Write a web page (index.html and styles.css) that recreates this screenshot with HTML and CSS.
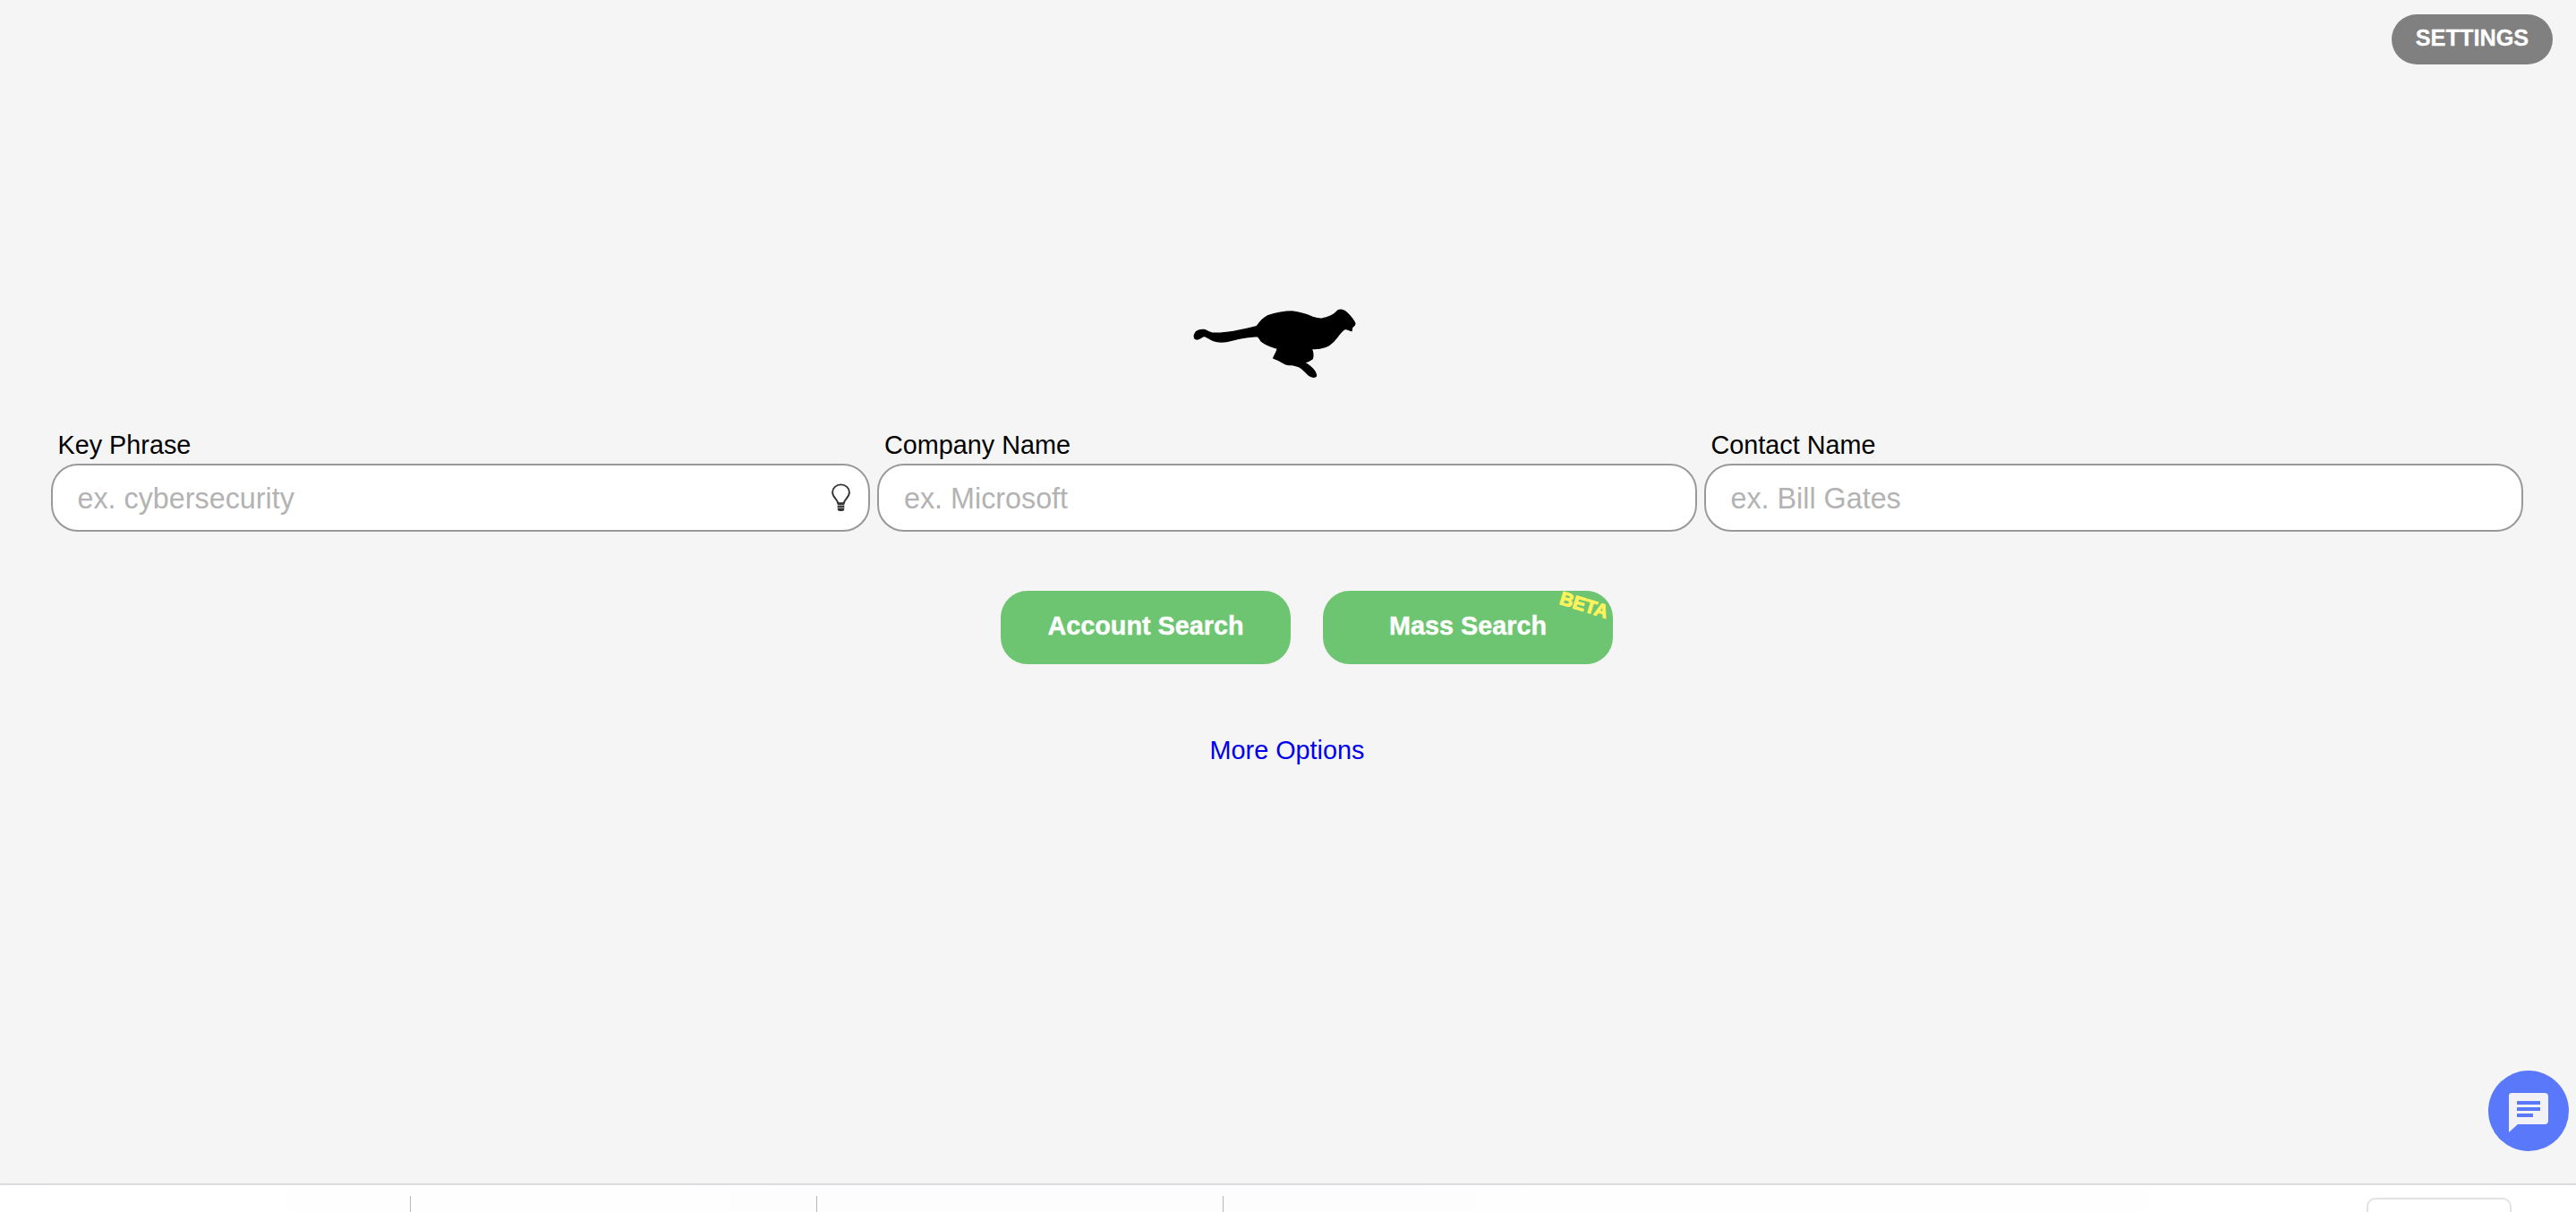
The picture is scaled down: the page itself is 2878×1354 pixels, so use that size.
FILE: index.html
```html
<!DOCTYPE html>
<html lang="en">
<head>
<meta charset="utf-8">
<title>Search</title>
<link rel="stylesheet" href="styles.css">
</head>
<body>
<div class="page">
  <header class="topbar"><button class="settings">SETTINGS</button></header>
  <div class="logo-row">
    <svg class="logo" viewBox="0 0 840 360" width="280" height="120" aria-hidden="true">
      <path fill-rule="evenodd" d="M163 163C166 150 178 144 195 145C205 147 208 154 222 156C250 159 310 150 372 134C382 120 392 106 408 99C435 90 462 84 490 84C515 86 535 93 560 103C572 107 582 109 592 108C610 105 630 97 645 80C655 77 668 82 676 90C686 100 697 112 702 125C700 132 696 135 692 137L690 149C682 148 676 142 668 142C660 146 650 158 640 172C628 188 612 203 590 206C578 209 566 209 556 209C561 220 562 232 559 242C552 248 542 252 532 255C545 262 558 272 566 284C570 291 573 297 571 301C566 306 555 304 546 297C535 288 528 276 515 270C505 266 495 264 488 262C478 264 468 262 460 256C450 248 440 244 428 240C432 232 438 222 442 208C425 204 400 194 388 184C384 178 380 171 376 167C345 168 320 173 290 180C270 186 245 188 228 182C215 177 205 168 195 166C187 170 182 176 172 177C165 177 161 172 163 163ZM462 235C468 238 476 238 482 235C476 233 468 233 462 235ZM520 236C527 234 531 229 530 222C532 229 528 235 520 236Z"/>
    </svg>
  </div>
  <form class="fields">
    <label class="field">
      <span class="field-label">Key Phrase</span>
      <span class="input-wrap">
        <input class="input" type="text" placeholder="ex. cybersecurity">
        <svg class="bulb" viewBox="0 0 24 34" width="23" height="32" aria-hidden="true">
          <path d="M8.500 23.500C8 19 2 16.500 2 10.500C2 5.500 6.500 1.500 12 1.500C17.500 1.500 22 5.500 22 10.500C22 16.500 16 19 15.500 23.500Z" fill="none" stroke="#333" stroke-width="2"/>
          <path d="M8 23h8v7.500q0 2.500-2.500 2.500h-3q-2.500 0-2.500-2.500z" fill="#333"/>
          <path d="M8 26h8M8 29h8" stroke="#bbb" stroke-width="1"/>
        </svg>
      </span>
    </label>
    <label class="field">
      <span class="field-label">Company Name</span>
      <span class="input-wrap"><input class="input" type="text" placeholder="ex. Microsoft"></span>
    </label>
    <label class="field">
      <span class="field-label">Contact Name</span>
      <span class="input-wrap"><input class="input" type="text" placeholder="ex. Bill Gates"></span>
    </label>
  </form>
  <div class="actions">
    <button class="action">Account Search</button>
    <button class="action">Mass Search<span class="beta">BETA</span></button>
  </div>
  <a class="more" href="#">More Options</a>
  <footer class="footer">
    <div class="cell cell-first"></div>
    <div class="cell"></div>
    <div class="cell"></div>
    <div class="footer-box"></div>
  </footer>
  <button class="chat" aria-label="Chat">
    <svg viewBox="0 0 44 44" width="44" height="44" aria-hidden="true">
      <path d="M3 0H40Q44 0 44 4V31Q44 35 40 35H10L0 44V3Q0 0 3 0Z" fill="#f2f2f6"/>
      <path d="M9 9H35V13H9ZM9 16H35V20H9ZM9 23H27V27H9Z" fill="#5a78fa"/>
    </svg>
  </button>
</div>
</body>
</html>
```
FILE: styles.css
```css
* { box-sizing: border-box; }
html, body { margin: 0; height: 100%; }
body {
  background: #f5f5f5;
  color: #000;
  font-family: "Liberation Sans", Arial, sans-serif;
  overflow: hidden;
}
.page {
  position: relative;
  height: 100vh;
  display: flex;
  flex-direction: column;
  overflow: hidden;
}
.topbar {
  display: flex;
  justify-content: flex-end;
  padding: 16px 26px 0 0;
}
.settings {
  width: 180px;
  height: 56px;
  border: 0;
  border-radius: 28px;
  background: #808080;
  color: #fff;
  font: bold 25.3px "Liberation Sans", Arial, sans-serif;
  -webkit-text-stroke: 0.3px #fff;
  padding: 0 0 3px;
}
.logo-row {
  display: flex;
  justify-content: flex-start;
  margin-top: 248px;
  padding-left: 1280px;
}
.logo { display: block; }
.logo path { stroke: #000; stroke-width: 4; stroke-linejoin: round; }
.fields {
  display: grid;
  grid-template-columns: repeat(3, 1fr);
  column-gap: 8px;
  margin-top: 42px;
  padding: 0 59px 0 56.500px;
}
.field { display: flex; flex-direction: column; min-width: 0; }
.field-label {
  height: 36px;
  line-height: 31px;
  font-size: 28.8px;
  padding-left: 8px;
}
.input-wrap { position: relative; display: block; }
.input {
  display: block;
  width: 100%;
  height: 76px;
  border: 2px solid #999;
  border-radius: 30px;
  background: #fff;
  padding: 2px 28px 0;
  font: 32.3px "Liberation Sans", Arial, sans-serif;
  color: #000;
  outline: none;
}
.input::placeholder { color: #b3b3b3; opacity: 1; }
.bulb {
  position: absolute;
  right: 21px;
  top: 22px;
}
.actions {
  display: flex;
  justify-content: center;
  gap: 36px;
  margin-top: 66px;
  padding-left: 42px;
}
.action {
  position: relative;
  width: 324px;
  height: 82px;
  border: 0;
  border-radius: 30px;
  background: #6dc571;
  color: #fff;
  font: bold 28.8px "Liberation Sans", Arial, sans-serif;
  -webkit-text-stroke: 0.4px #fff;
  padding: 0 0 4px;
}
.beta {
  position: absolute;
  right: 4px;
  top: 4px;
  font-size: 21px;
  font-weight: bold;
  color: #fff35c;
  -webkit-text-stroke: 1px #fff35c;
  transform: rotate(17deg);
}
.more {
  align-self: center;
  margin: 78px 2px 0 0;
  color: #0000ee;
  font-size: 28.8px;
  line-height: 36px;
  text-decoration: none;
}
.footer {
  margin-top: auto;
  height: 32px;
  flex: none;
  display: flex;
  align-items: flex-start;
  padding-top: 12px;
  background: linear-gradient(90deg, #fff 0%, #fdfdfd 40%, #fff 100%);
  border-top: 2px solid #dcdce0;
  overflow: hidden;
}
.cell {
  width: 454px;
  height: 40px;
  border-right: 1px solid #b8b8b8;
  flex: none;
}
.cell-first { width: 459px; }
.footer-box {
  margin: 2px 72px 0 auto;
  width: 162px;
  height: 60px;
  flex: none;
  border: 2px solid #e2e2e2;
  border-radius: 10px;
  background: #fff;
}
.chat {
  position: absolute;
  left: 2780px;
  top: 1196px;
  width: 90px;
  height: 90px;
  border: 0;
  border-radius: 50%;
  background: #5a78fa;
  padding: 3px 0 0 0;
  display: flex;
  align-items: center;
  justify-content: center;
}
```
